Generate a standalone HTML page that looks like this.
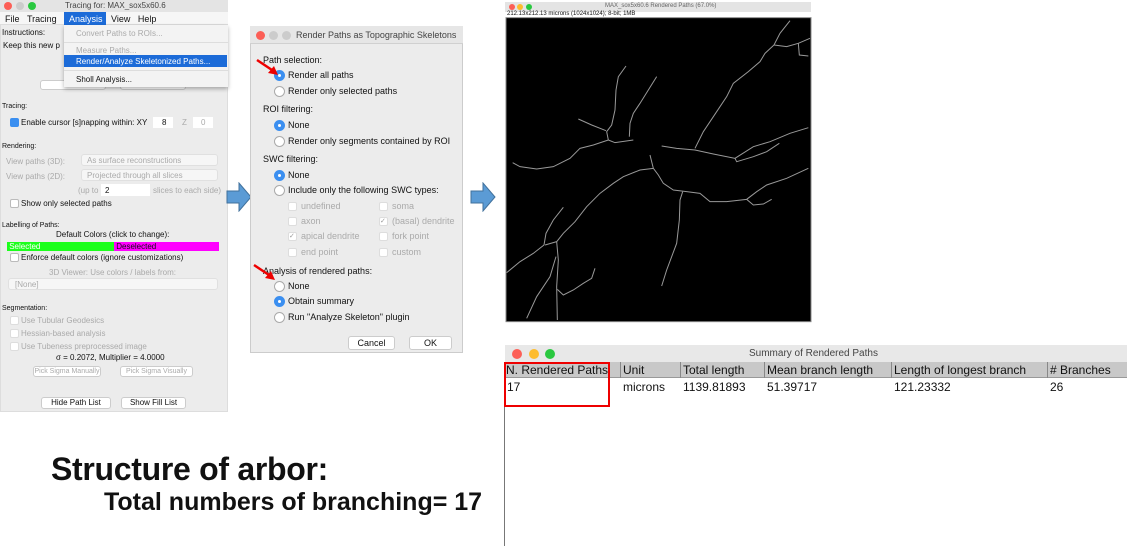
<!DOCTYPE html>
<html><head><meta charset="utf-8"><style>
*{box-sizing:border-box;margin:0;padding:0}
body{width:1127px;height:548px;background:#fff;position:relative;overflow:hidden;font-family:"Liberation Sans",sans-serif;color:#111}
.a{position:absolute;white-space:nowrap}
.s{font-size:8px}
.g{color:#aaa}
.cb{position:absolute;width:9px;height:9px;border:1px solid #bbb;background:#fff;border-radius:2px}
.rd{position:absolute;width:11px;height:11px;border:1px solid #aaa;border-radius:50%;background:#fff}
.rd.on{background:#3b8ff0;border-color:#3b8ff0}
.rd.on:after{content:"";position:absolute;left:3px;top:3px;width:3px;height:3px;border-radius:50%;background:#fff}
.btn{position:absolute;background:#fff;border:1px solid #ccc;border-radius:3px;text-align:center;font-size:8px}
.dot{position:absolute;width:9px;height:9px;border-radius:50%}
</style></head><body>

<div class="a" style="left:0;top:0;width:228px;height:412px;background:#ececec;border:1px solid #ddd"></div>
<div class="a" style="left:0;top:0;width:228px;height:12px;background:#e4e4e4"></div>
<div class="dot" style="left:4px;top:2px;background:#fc5f57;width:8px;height:8px"></div>
<div class="dot" style="left:16px;top:2px;background:#ccc;width:8px;height:8px"></div>
<div class="dot" style="left:28px;top:2px;background:#2ac840;width:8px;height:8px"></div>
<div class="a s" style="left:65px;top:1px;color:#444">Tracing for: MAX_sox5x60.6</div>
<div class="a" style="left:0;top:12px;width:228px;height:13px;background:#f6f6f6;border-bottom:1px solid #ddd"></div>
<div class="a s" style="left:5px;top:14px;font-size:9px">File&nbsp;&nbsp;&nbsp;Tracing</div>
<div class="a" style="left:64px;top:12px;width:42px;height:13px;background:#1c6bd8"></div>
<div class="a" style="left:69px;top:14px;font-size:9px;color:#fff">Analysis</div>
<div class="a" style="left:111px;top:14px;font-size:9px">View&nbsp;&nbsp;&nbsp;Help</div>
<div class="a s" style="left:2px;top:28px">Instructions:</div>
<div class="a s" style="left:3px;top:41px">Keep this new p</div>
<div class="btn" style="left:40px;top:80px;width:66px;height:10px"></div>
<div class="btn" style="left:120px;top:80px;width:66px;height:10px"></div>
<div class="a" style="left:64px;top:25px;width:164px;height:62px;background:#f3f3f3;box-shadow:0 2px 4px rgba(0,0,0,.3)"></div>
<div class="a s g" style="left:76px;top:29px">Convert Paths to ROIs...</div>
<div class="a" style="left:64px;top:42px;width:164px;height:1px;background:#ddd"></div>
<div class="a s g" style="left:76px;top:46px">Measure Paths...</div>
<div class="a" style="left:64px;top:55px;width:163px;height:12px;background:#1c6bd8"></div>
<div class="a s" style="left:76px;top:57px;color:#fff">Render/Analyze Skeletonized Paths...</div>
<div class="a" style="left:64px;top:70px;width:164px;height:1px;background:#ddd"></div>
<div class="a s" style="left:76px;top:75px">Sholl Analysis...</div>

<div class="a s" style="left:2px;top:103px;font-size:7px">Tracing:</div>
<div class="cb" style="left:10px;top:118px;background:#3b8ff0;border-color:#3b8ff0"></div>
<div class="a s" style="left:21px;top:118px">Enable cursor [s]napping within: XY</div>
<div class="a" style="left:153px;top:117px;width:20px;height:11px;background:#fff"></div>
<div class="a s" style="left:162px;top:118px">8</div>
<div class="a s g" style="left:182px;top:118px">Z</div>
<div class="a" style="left:193px;top:117px;width:20px;height:11px;background:#fff"></div>
<div class="a s g" style="left:201px;top:118px">0</div>
<div class="a s" style="left:2px;top:143px;font-size:7px">Rendering:</div>
<div class="a s g" style="left:6px;top:157px">View paths (3D):</div>
<div class="a" style="left:81px;top:154px;width:137px;height:12px;background:#f6f6f6;border:1px solid #e0e0e0;border-radius:3px"></div>
<div class="a s g" style="left:87px;top:156px">As surface reconstructions</div>
<div class="a s g" style="left:6px;top:172px">View paths (2D):</div>
<div class="a" style="left:81px;top:169px;width:137px;height:12px;background:#f6f6f6;border:1px solid #e0e0e0;border-radius:3px"></div>
<div class="a s g" style="left:87px;top:171px">Projected through all slices</div>
<div class="a s g" style="left:78px;top:186px">(up to</div>
<div class="a" style="left:101px;top:184px;width:49px;height:12px;background:#fff"></div>
<div class="a s" style="left:105px;top:186px">2</div>
<div class="a s g" style="left:153px;top:186px">slices to each side)</div>
<div class="cb" style="left:10px;top:199px"></div>
<div class="a s" style="left:21px;top:199px">Show only selected paths</div>
<div class="a s" style="left:2px;top:222px;font-size:7px">Labelling of Paths:</div>
<div class="a s" style="left:56px;top:230px">Default Colors (click to change):</div>
<div class="a" style="left:7px;top:242px;width:107px;height:9px;background:#1cff1c;font-size:8px;color:#fff;line-height:9px">&nbsp;Selected</div>
<div class="a" style="left:114px;top:242px;width:105px;height:9px;background:#ff00ff;font-size:8px;line-height:9px">&nbsp;Deselected</div>
<div class="cb" style="left:10px;top:253px"></div>
<div class="a s" style="left:21px;top:253px">Enforce default colors (ignore customizations)</div>
<div class="a s g" style="left:49px;top:268px">3D Viewer: Use colors / labels from:</div>
<div class="a" style="left:8px;top:278px;width:210px;height:12px;background:#f6f6f6;border:1px solid #e0e0e0;border-radius:3px"></div>
<div class="a s g" style="left:15px;top:280px">[None]</div>
<div class="a s" style="left:2px;top:305px;font-size:7px">Segmentation:</div>
<div class="cb" style="left:10px;top:316px;border-color:#ddd"></div>
<div class="a s g" style="left:21px;top:316px">Use Tubular Geodesics</div>
<div class="cb" style="left:10px;top:329px;border-color:#ddd"></div>
<div class="a s g" style="left:21px;top:329px">Hessian-based analysis</div>
<div class="cb" style="left:10px;top:342px;border-color:#ddd"></div>
<div class="a s g" style="left:21px;top:342px">Use Tubeness preprocessed image</div>
<div class="a s" style="left:56px;top:353px">σ = 0.2072, Multiplier = 4.0000</div>
<div class="btn g" style="left:33px;top:366px;width:68px;height:11px;font-size:7px;line-height:9px">Pick Sigma Manually</div>
<div class="btn g" style="left:120px;top:366px;width:73px;height:11px;font-size:7px;line-height:9px">Pick Sigma Visually</div>
<div class="btn" style="left:41px;top:397px;width:70px;height:12px;line-height:10px">Hide Path List</div>
<div class="btn" style="left:121px;top:397px;width:65px;height:12px;line-height:10px">Show Fill List</div>

<svg class="a" style="left:226px;top:182px" width="26" height="30"><polygon points="1,9 13,9 13,1 25,15 13,29 13,21 1,21" fill="#5b9bd5" stroke="#41719c"/></svg>
<svg class="a" style="left:470px;top:182px" width="26" height="30"><polygon points="1,9 13,9 13,1 25,15 13,29 13,21 1,21" fill="#5b9bd5" stroke="#41719c"/></svg>

<div class="a" style="left:250px;top:26px;width:213px;height:327px;background:#ececec;border:1px solid #ccc"></div>
<div class="a" style="left:250px;top:26px;width:213px;height:18px;background:#e6e6e6;border-bottom:1px solid #d0d0d0"></div>
<div class="dot" style="left:256px;top:31px;background:#fc5f57"></div>
<div class="dot" style="left:269px;top:31px;background:#ccc"></div>
<div class="dot" style="left:282px;top:31px;background:#ccc"></div>
<div class="a" style="left:296px;top:30px;font-size:9px;color:#444">Render Paths as Topographic Skeletons</div>
<div style="font-size:9px">
<div class="a" style="left:263px;top:55px">Path selection:</div>
<div class="rd on" style="left:274px;top:70px"></div><div class="a" style="left:288px;top:70px">Render all paths</div>
<div class="rd" style="left:274px;top:86px"></div><div class="a" style="left:288px;top:86px">Render only selected paths</div>
<div class="a" style="left:263px;top:104px">ROI filtering:</div>
<div class="rd on" style="left:274px;top:120px"></div><div class="a" style="left:288px;top:120px">None</div>
<div class="rd" style="left:274px;top:136px"></div><div class="a" style="left:288px;top:136px">Render only segments contained by ROI</div>
<div class="a" style="left:263px;top:154px">SWC filtering:</div>
<div class="rd on" style="left:274px;top:170px"></div><div class="a" style="left:288px;top:170px">None</div>
<div class="rd" style="left:274px;top:185px"></div><div class="a" style="left:288px;top:185px">Include only the following SWC types:</div>
<div class="cb" style="left:288px;top:202px;border-color:#ddd"></div><div class="a g" style="left:301px;top:201px">undefined</div>
<div class="cb" style="left:379px;top:202px;border-color:#ddd"></div><div class="a g" style="left:392px;top:201px">soma</div>
<div class="cb" style="left:288px;top:217px;border-color:#ddd"></div><div class="a g" style="left:301px;top:216px">axon</div>
<div class="cb" style="left:379px;top:217px;border-color:#ddd;font-size:7px;line-height:7px;color:#999">✓</div><div class="a g" style="left:392px;top:216px">(basal) dendrite</div>
<div class="cb" style="left:288px;top:232px;border-color:#ddd;font-size:7px;line-height:7px;color:#999">✓</div><div class="a g" style="left:301px;top:231px">apical dendrite</div>
<div class="cb" style="left:379px;top:232px;border-color:#ddd"></div><div class="a g" style="left:392px;top:231px">fork point</div>
<div class="cb" style="left:288px;top:248px;border-color:#ddd"></div><div class="a g" style="left:301px;top:247px">end point</div>
<div class="cb" style="left:379px;top:248px;border-color:#ddd"></div><div class="a g" style="left:392px;top:247px">custom</div>
<div class="a" style="left:263px;top:266px">Analysis of rendered paths:</div>
<div class="rd" style="left:274px;top:281px"></div><div class="a" style="left:288px;top:281px">None</div>
<div class="rd on" style="left:274px;top:296px"></div><div class="a" style="left:288px;top:296px">Obtain summary</div>
<div class="rd" style="left:274px;top:312px"></div><div class="a" style="left:288px;top:312px">Run "Analyze Skeleton" plugin</div>
</div>
<div class="btn" style="left:348px;top:336px;width:47px;height:14px;font-size:9px;line-height:12px">Cancel</div>
<div class="btn" style="left:409px;top:336px;width:43px;height:14px;font-size:9px;line-height:12px">OK</div>
<svg class="a" style="left:255px;top:58px" width="30" height="20"><line x1="2" y1="2" x2="20" y2="14" stroke="#e00" stroke-width="2.5"/><polygon points="23,17 13,15 19,8" fill="#e00"/></svg>
<svg class="a" style="left:252px;top:263px" width="30" height="20"><line x1="2" y1="2" x2="20" y2="14" stroke="#e00" stroke-width="2.5"/><polygon points="23,17 13,15 19,8" fill="#e00"/></svg>

<div class="a" style="left:505px;top:2px;width:306px;height:10px;background:#e4e4e4"></div>
<div class="dot" style="left:509px;top:4px;background:#fc5f57;width:6px;height:6px"></div>
<div class="dot" style="left:517px;top:4px;background:#fdbc2e;width:6px;height:6px"></div>
<div class="dot" style="left:526px;top:4px;background:#2ac840;width:6px;height:6px"></div>
<div class="a" style="left:605px;top:3px;font-size:6px;color:#666">MAX_sox5x60.6 Rendered Paths (67.0%)</div>
<div class="a" style="left:507px;top:11px;font-size:6px">212.13x212.13 microns (1024x1024); 8-bit; 1MB</div>
<svg class="a" style="left:500px;top:0" width="320" height="330" viewBox="0 0 960 990">
<rect x="18" y="53" width="915" height="912" fill="#000" stroke="#888" stroke-width="3"/>
<g fill="none" stroke="#999" stroke-width="3">
<path d="M870 62 L840 100 L822 135 L795 160 L780 185 L745 215 L700 250 L680 290 L640 350 L610 395 L585 445"/>
<path d="M822 135 L860 140 L895 130 L930 115"/><path d="M895 130 L898 165 L925 168"/>
<path d="M378 198 L355 230 L348 270 L345 330 L335 375 L320 395 L325 420"/>
<path d="M235 357 L275 375 L318 392"/>
<path d="M470 230 L445 270 L420 310 L400 340 L390 370 L388 410"/>
<path d="M325 420 L345 428 L400 420"/>
<path d="M38 488 L60 500 L110 507 L160 500 L210 475 L240 445 L280 435 L325 420"/>
<path d="M485 438 L530 445 L585 450 L640 462 L705 475 L760 440 L810 425 L870 400 L925 383"/>
<path d="M705 475 L710 485 L760 470 L800 455 L838 430"/>
<path d="M450 465 L460 505 L475 525 L490 550 L520 570 L560 575 L600 580 L630 605 L680 605 L740 598 L770 575 L800 555 L860 535 L925 505"/>
<path d="M740 598 L760 615 L790 612 L815 598"/>
<path d="M460 505 L420 510 L370 530 L340 550 L300 580 L260 620 L225 665 L190 700 L170 725 L135 735"/>
<path d="M548 575 L540 600 L538 660 L530 730 L515 770 L500 810 L485 858"/>
<path d="M190 622 L160 660 L138 700 L132 735 L100 760 L60 785 L20 818"/>
<path d="M170 725 L175 780 L170 860 L172 960"/>
<path d="M168 770 L150 830 L110 890 L80 955"/>
<path d="M172 868 L190 885 L220 870 L250 850 L275 835 L285 805"/>
</g></svg>

<div class="a" style="left:505px;top:345px;width:622px;height:17px;background:#e8e8e8"></div>
<div class="dot" style="left:512px;top:349px;background:#fc5f57;width:10px;height:10px"></div>
<div class="dot" style="left:529px;top:349px;background:#fdbc2e;width:10px;height:10px"></div>
<div class="dot" style="left:545px;top:349px;background:#2ac840;width:10px;height:10px"></div>
<div class="a" style="left:749px;top:348px;font-size:10px;color:#444">Summary of Rendered Paths</div>
<div class="a" style="left:505px;top:362px;width:622px;height:16px;background:#c8c8c8;border-bottom:1px solid #999"></div>
<div style="font-size:12px">
<div class="a" style="left:506px;top:363px">N. Rendered Paths</div>
<div class="a" style="left:620px;top:362px;width:1px;height:16px;background:#888"></div>
<div class="a" style="left:623px;top:363px">Unit</div>
<div class="a" style="left:680px;top:362px;width:1px;height:16px;background:#888"></div>
<div class="a" style="left:683px;top:363px">Total length</div>
<div class="a" style="left:764px;top:362px;width:1px;height:16px;background:#888"></div>
<div class="a" style="left:767px;top:363px">Mean branch length</div>
<div class="a" style="left:891px;top:362px;width:1px;height:16px;background:#888"></div>
<div class="a" style="left:894px;top:363px">Length of longest branch</div>
<div class="a" style="left:1047px;top:362px;width:1px;height:16px;background:#888"></div>
<div class="a" style="left:1050px;top:363px">#&nbsp;Branches</div>
<div class="a" style="left:507px;top:380px">17</div>
<div class="a" style="left:623px;top:380px">microns</div>
<div class="a" style="left:683px;top:380px">1139.81893</div>
<div class="a" style="left:767px;top:380px">51.39717</div>
<div class="a" style="left:894px;top:380px">121.23332</div>
<div class="a" style="left:1050px;top:380px">26</div>
</div>
<div class="a" style="left:504px;top:362px;width:1px;height:184px;background:#777"></div>
<div class="a" style="left:504px;top:362px;width:106px;height:45px;border:2px solid #e00"></div>

<div class="a" style="left:51px;top:451px;font-size:32px;font-weight:bold;letter-spacing:-0.3px">Structure of arbor:</div>
<div class="a" style="left:104px;top:488px;font-size:25px;font-weight:bold">Total numbers of branching= 17</div>
</body></html>
